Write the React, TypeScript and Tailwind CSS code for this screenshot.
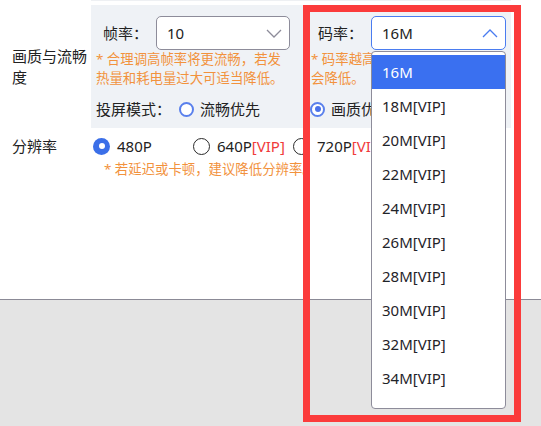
import { FC } from 'react';

const font = { fontFamily: '"Noto Sans", "Noto Sans CJK SC", sans-serif' };

const Chevron: FC<{ up?: boolean; color: string }> = ({ up, color }) => (
  <svg width="16" height="9" viewBox="0 0 16 9" fill="none">
    <polyline
      points={up ? '1,8 8,1 15,8' : '1,1 8,8 15,1'}
      stroke={color}
      strokeWidth="1.3"
      strokeLinejoin="miter"
    />
  </svg>
);

// qt style radio in the grey panel
const RingRadio: FC<{ checked?: boolean }> = ({ checked }) => (
  <span className="flex h-[15px] w-[15px] shrink-0 items-center justify-center rounded-full border-2 border-[#5a80ec] bg-white">
    {checked && <span className="h-[6px] w-[6px] rounded-full bg-[#4a72ea]"></span>}
  </span>
);

const FillRadio: FC<{ checked?: boolean }> = ({ checked }) =>
  checked ? (
    <span className="flex h-[17px] w-[17px] shrink-0 items-center justify-center rounded-full bg-[#3b6fe8]">
      <span className="h-[6px] w-[6px] rounded-full bg-white"></span>
    </span>
  ) : (
    <span className="h-[17px] w-[17px] shrink-0 rounded-full border-[1.5px] border-[#2a2a2a] bg-white"></span>
  );

const bitrates = ['16M', '18M[VIP]', '20M[VIP]', '22M[VIP]', '24M[VIP]', '26M[VIP]', '28M[VIP]', '30M[VIP]', '32M[VIP]', '34M[VIP]', '36M[VIP]'];

const App: FC = () => {
  return (
    <div className="relative flex h-[426px] w-[541px] flex-col overflow-hidden bg-white text-[#222]" style={font}>
      <div className="h-[299px] shrink-0">
        <div className="ml-[91px] h-[1px] w-[420px] bg-[#eef0f3]"></div>

        {/* 画质与流畅度 */}
        <div className="mt-[4px] flex items-center">
          <div className="w-[91px] pl-[12px] pr-[3px] text-[15px] leading-[21px]">画质与流畅度</div>
          <div className="h-[123px] w-[420px] bg-[#eff2f6] pl-[5px] pt-[11px]">
            <div className="flex">
              <div className="w-[215px]">
                <div className="flex items-center gap-[8px] pl-[7px]">
                  <span className="text-[15px]">帧率：</span>
                  <div className="flex h-[34px] w-[134px] items-center justify-between rounded-[5px] border border-[#8d8c9a] bg-white pl-[10px] pr-[7px] text-[15px]">
                    <span>10</span>
                    <Chevron color="#8d8c9a" />
                  </div>
                </div>
                <div className="text-[13.4px] leading-[19px] text-[#f2923d]">
                  <div>* 合理调高帧率将更流畅，若发</div>
                  <div>热量和耗电量过大可适当降低。</div>
                </div>
              </div>
              <div className="w-[200px]">
                <div className="flex items-center gap-[8px] pl-[7px]">
                  <span className="text-[15px]">码率：</span>
                  <div className="flex h-[34px] w-[135px] items-center justify-between rounded-[5px] border border-[#4a7cf0] bg-white pl-[10px] pr-[7px] text-[15px]">
                    <span>16M</span>
                    <Chevron up color="#4a7cf0" />
                  </div>
                </div>
                <div className="text-[13.4px] leading-[19px] text-[#f2923d]">
                  <div>* 码率越高画质越清晰，流畅度</div>
                  <div>会降低。</div>
                </div>
              </div>
            </div>
            <div className="mt-[10px] flex h-[22px] items-center text-[15px]">
              <span className="w-[83px]">投屏模式：</span>
              <div className="flex w-[131px] items-center gap-[6px]">
                <RingRadio />
                <span>流畅优先</span>
              </div>
              <div className="flex items-center gap-[6px]">
                <RingRadio checked />
                <span>画质优先</span>
              </div>
            </div>
          </div>
        </div>

        {/* 分辨率 */}
        <div className="mt-[7px] flex h-[22px] items-center text-[15px]">
          <span className="w-[93px] pl-[12px]">分辨率</span>
          <div className="flex w-[100px] items-center gap-[7px]">
            <FillRadio checked />
            <span>480P</span>
          </div>
          <div className="flex w-[100px] items-center gap-[7px]">
            <FillRadio />
            <span>
              640P<span className="text-[#f03a3a]">[VIP]</span>
            </span>
          </div>
          <div className="flex items-center gap-[7px]">
            <FillRadio />
            <span>
              720P<span className="text-[#f03a3a]">[VIP]</span>
            </span>
          </div>
        </div>
        <div className="mt-[3px] pl-[104px] text-[13.4px] leading-[19px] text-[#f2923d]">* 若延迟或卡顿，建议降低分辨率。</div>
      </div>
      <div className="flex-1 border-t border-[#8b8a96] bg-[#e4e4e4]"></div>

      {/* 码率 dropdown */}
      <div className="absolute left-[371px] top-[51px] h-[358px] w-[135px] overflow-hidden rounded-[4px] border border-[#8d8c9a] bg-white pt-[3px]">
        {bitrates.map((b, i) => (
          <div
            key={b}
            className={`flex h-[34px] items-center pl-[10px] text-[15px] ${i === 0 ? 'bg-[#3a70f0] text-white' : 'text-[#1f2329]'}`}
          >
            {b}
          </div>
        ))}
      </div>

      {/* annotation frame */}
      <div className="pointer-events-none absolute left-[303px] top-[5px] h-[417px] w-[218px] border-[7px] border-[#fb3b3b]"></div>
    </div>
  );
};

export default App;
